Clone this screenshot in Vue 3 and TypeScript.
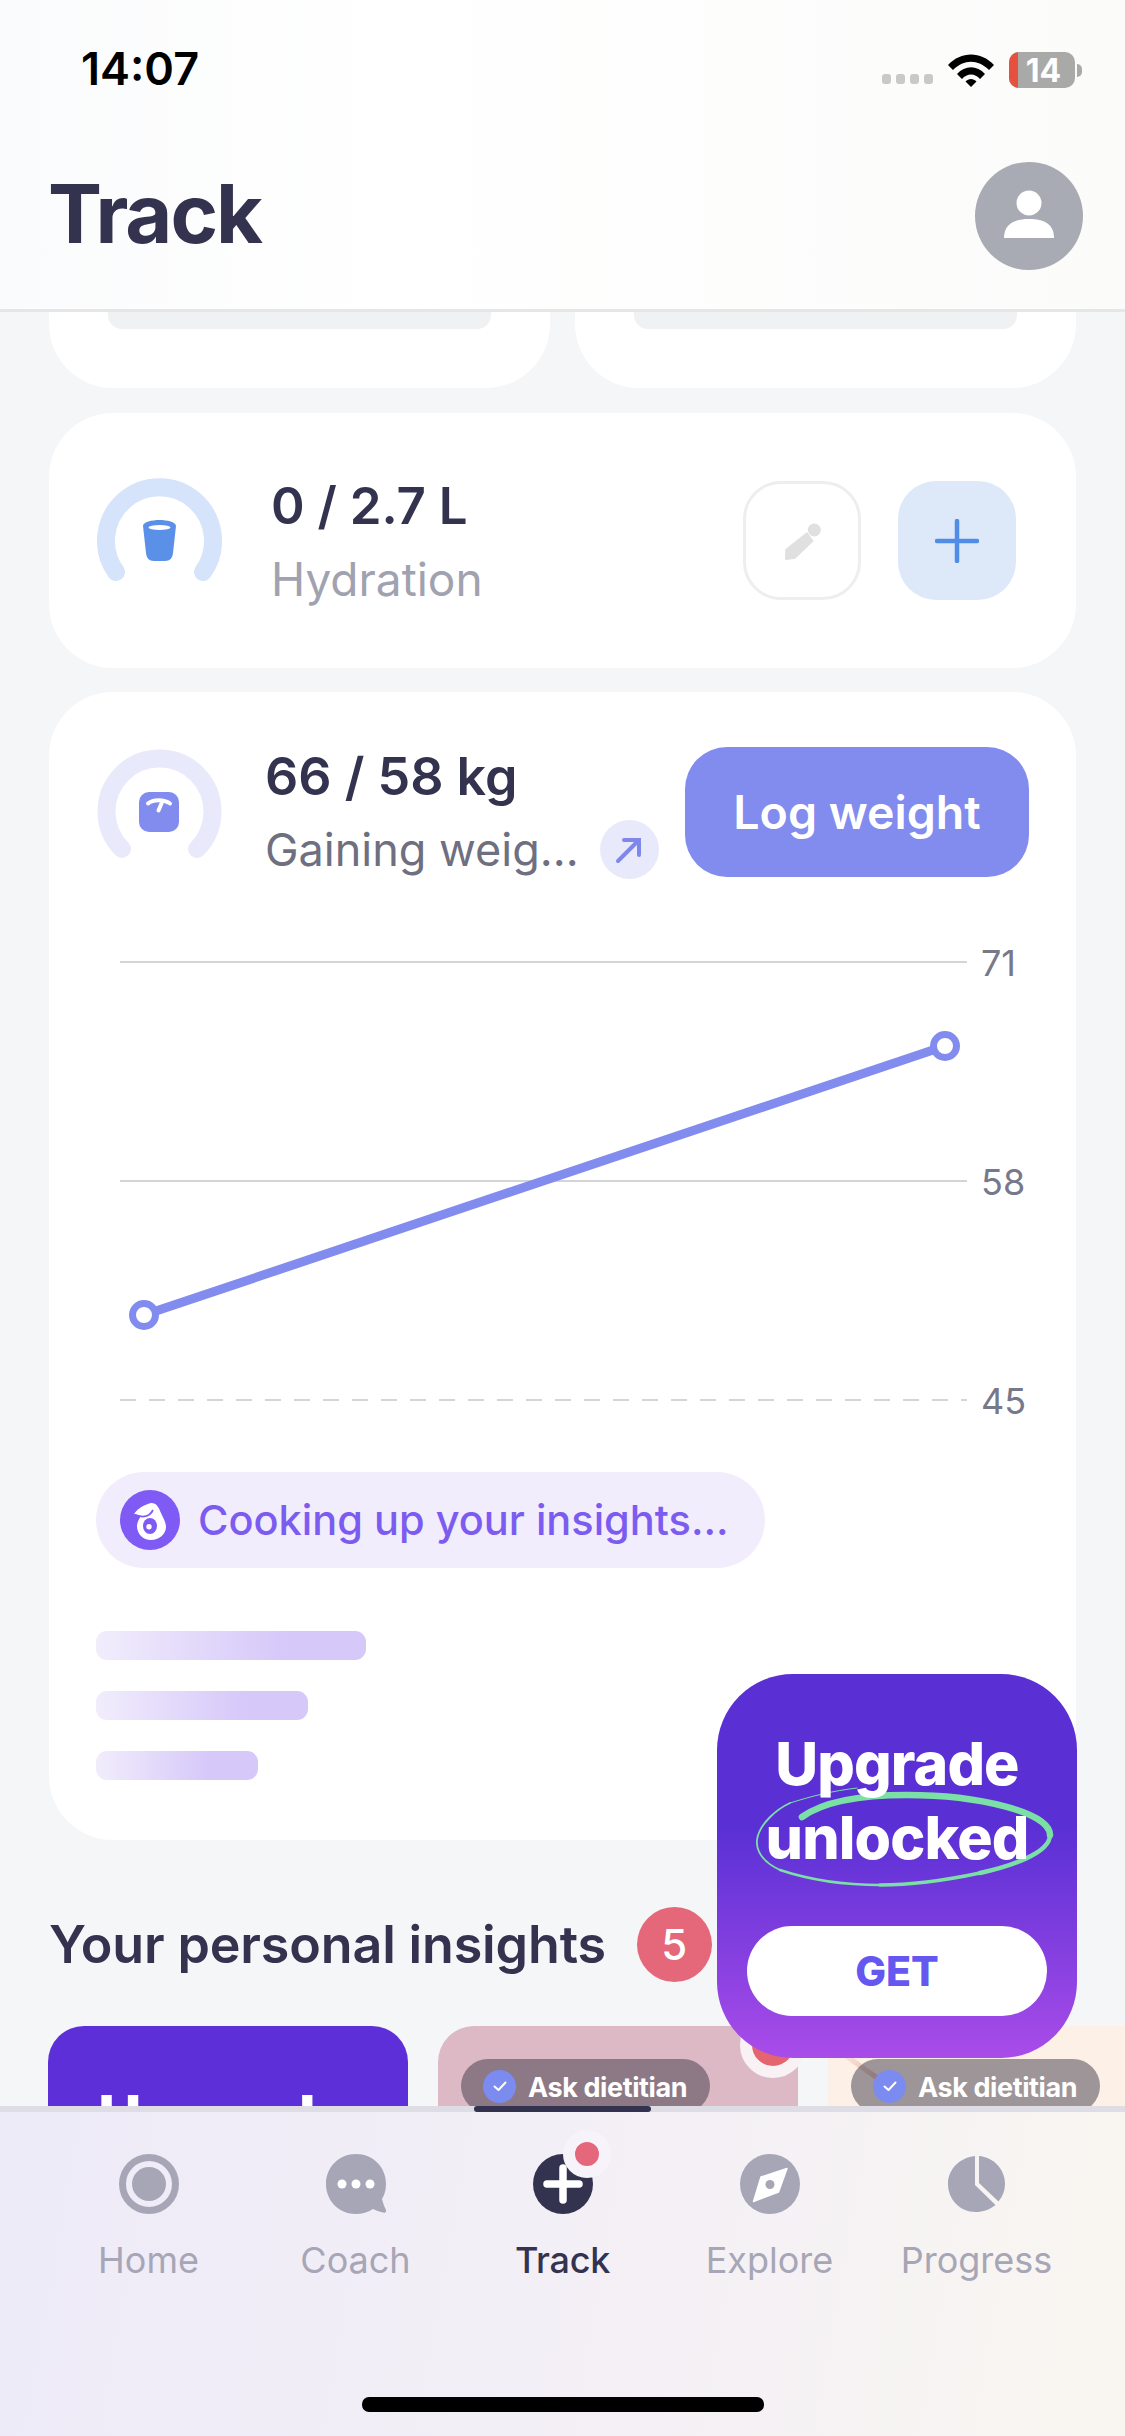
<script setup lang="ts">
const bars: number[] = [270, 212, 162]
const insightCards = [
  { tone: 'rose', dot: true },
  { tone: 'peach', dot: false },
]
</script>

<template>
  <div class="screen">
    <header class="top">
      <div class="status">
        <span class="time">14:07</span>
        <div class="sys">
          <span class="signal"><i></i><i></i><i></i><i></i></span>
          <svg class="wifi" viewBox="0 0 46 33" width="46" height="33">
            <path d="M0 11 C13 -3 33 -3 46 11 L41 16 C30 5 16 5 5 16 Z" fill="#000" />
            <path d="M9 20 C17 11 29 11 37 20 L32 25 C27 19 19 19 14 25 Z" fill="#000" />
            <path d="M17.5 27.5 C20.5 24 25.5 24 28.5 27.5 L23 33 Z" fill="#000" />
          </svg>
          <div class="battery">
            <div class="cell"><b class="low"></b><span>14</span></div>
            <b class="tip"></b>
          </div>
        </div>
      </div>
      <div class="title-row">
        <h1>Track</h1>
        <div class="avatar">
          <svg viewBox="0 0 108 108" width="108" height="108">
            <ellipse cx="54" cy="41" rx="12.5" ry="12.5" fill="#fff" />
            <path d="M29 76 C29 62 39 57 54 57 C69 57 79 62 79 76 Z" fill="#fff" />
          </svg>
        </div>
      </div>
    </header>

    <main class="feed">
      <div class="stub-row">
        <div class="stub"><div class="stub-bar"></div></div>
        <div class="stub"><div class="stub-bar"></div></div>
      </div>

      <section class="card water">
        <svg class="ring" viewBox="0 0 125 125" width="125" height="125">
          <path d="M19 94 A53.5 53.5 0 1 1 106 94" fill="none" stroke="#d5e4fa" stroke-width="18" stroke-linecap="round" />
          <path d="M46 48 C46 44 55 42 62.500 42 C70 42 79 44 79 48 L76 75 C75.500 80 73 83 68 83 L57 83 C52 83 49.500 80 49 75 Z" fill="#5b90e8" />
          <ellipse cx="62.500" cy="49.500" rx="11" ry="2.500" fill="#fff" />
        </svg>
        <div class="water-text">
          <div class="value">0 / 2.7 L</div>
          <div class="sub">Hydration</div>
        </div>
        <button class="square ghost">
          <svg viewBox="0 0 40 40" width="40" height="40">
            <path d="M3.300 28.300 L25 11 L31.700 20 L13.300 37.700 L4.500 39 Q3 39 3 37.500 Z" fill="#e0e0e0" />
            <circle cx="32.300" cy="9" r="6.500" fill="#e0e0e0" />
          </svg>
        </button>
        <button class="square tint">
          <svg viewBox="0 0 44 44" width="44" height="44">
            <path d="M22 2 V42 M2 22 H42" stroke="#4f8de6" stroke-width="4.500" stroke-linecap="round" />
          </svg>
        </button>
      </section>

      <section class="card weight">
        <div class="weight-head">
          <svg class="ring ring-weight" viewBox="0 0 125 125" width="125" height="125">
            <path d="M25 100 A53 53 0 1 1 100 100" fill="none" stroke="#e8eafb" stroke-width="18" stroke-linecap="round" />
            <rect x="42" y="43" width="40" height="40" rx="10" fill="#828cee" />
            <path d="M51 54.500 C56 50 67 50 73 54.500 M65.500 52 L61.500 61.500" fill="none" stroke="#fff" stroke-width="4" stroke-linecap="round" />
          </svg>
          <div class="weight-text">
            <div class="value">66 / 58 kg</div>
            <div class="trend">
              <span class="sub dim">Gaining weig...</span>
              <span class="trend-dot">
                <svg viewBox="0 0 28 28" width="28" height="28">
                  <path d="M3 25 L24 4 M9 4 H24 V19" fill="none" stroke="#7f88e8" stroke-width="4" stroke-linecap="round" />
                </svg>
              </span>
            </div>
          </div>
          <button class="log">Log weight</button>
        </div>

        <svg class="chart" viewBox="0 0 1029 490" width="1029" height="490">
          <line x1="72" y1="22" x2="919" y2="22" stroke="#d4d5d8" stroke-width="2" />
          <line x1="72" y1="241" x2="919" y2="241" stroke="#d4d5d8" stroke-width="2" />
          <line x1="72" y1="460" x2="919" y2="460" stroke="#d4d5d8" stroke-width="2" stroke-dasharray="16 13" />
          <text x="933" y="36" class="axis">71</text>
          <text x="933" y="255" class="axis">58</text>
          <text x="933" y="474" class="axis">45</text>
          <line x1="96" y1="375" x2="897" y2="106" stroke="#828cee" stroke-width="9" />
          <circle cx="96" cy="375" r="11.500" fill="#fff" stroke="#828cee" stroke-width="7" />
          <circle cx="897" cy="106" r="11.500" fill="#fff" stroke="#828cee" stroke-width="7" />
        </svg>

        <div class="cooking">
          <svg viewBox="0 0 60 60" width="60" height="60">
            <circle cx="30" cy="30" r="30" fill="#7f5af5" />
            <path d="M31 13 C37 13 39 18 41 23 C43 28 46 32 46 37 C46 44 39 50 31 50 C23 50 17 44 17 36 C17 32 19 29 21 26 L14 24 C18 18 24 15 31 13 Z" fill="#fff" />
            <path d="M14.500 24.500 C21 27.500 29 28 33 20" fill="none" stroke="#7f5af5" stroke-width="1.800" />
            <ellipse cx="30" cy="36" rx="7" ry="8" fill="#7f5af5" />
            <circle cx="29" cy="36.700" r="2.700" fill="#fff" />
          </svg>
          <span>Cooking up your insights...</span>
        </div>

        <div class="lines">
          <div v-for="w in bars" :key="w" class="line" :style="{ width: w + 'px' }"></div>
        </div>
      </section>

      <div class="insights-head">
        <h2>Your personal insights</h2>
        <span class="count">5</span>
      </div>

      <div class="insights">
        <article class="insight plum"><strong>Upgrade</strong></article>
        <article v-for="c in insightCards" :key="c.tone" class="insight" :class="c.tone">
          <i v-if="c.tone === 'peach'" class="streak"></i>
          <div class="ask">
            <span class="tick">
              <svg viewBox="0 0 16 16" width="16" height="16">
                <path d="M2.500 8.500 L6.500 12 L13.500 4.500" fill="none" stroke="#fff" stroke-width="2" stroke-linecap="round" stroke-linejoin="round" />
              </svg>
            </span>
            <span class="ask-label">Ask dietitian</span>
          </div>
          <i v-if="c.dot" class="unread"></i>
        </article>
      </div>
    </main>

    <aside class="promo">
      <svg class="scribble" viewBox="0 0 360 384" width="360" height="384">
        <g fill="none" stroke="#7be0a5" stroke-linecap="round">
          <path d="M85 143 C110 125 150 121 190 121 C260 121 333 138 333 161" stroke-width="6.500" />
          <path d="M333 161 C333 180 290 193 263 199" stroke-width="4.500" />
          <path d="M263 199 C230 206 195 211 163 211" stroke-width="3.500" />
          <path d="M163 211 C120 211 90 205 63 196" stroke-width="2.500" />
          <path d="M63 196 C45 188 39 176 40 166 C42 150 60 135 73 129" stroke-width="1.800" />
          <path d="M73 129 C95 122 115 117 140 114" stroke-width="1" />
        </g>
      </svg>
      <div class="promo-text">Upgrade<br />unlocked</div>
      <button class="get">GET</button>
    </aside>

    <nav class="tabs">
      <i class="active-mark"></i>
      <div class="tab">
        <svg viewBox="0 0 60 60" width="60" height="60">
          <circle cx="30" cy="30" r="26.500" fill="none" stroke="#a6a6b6" stroke-width="7" />
          <circle cx="30" cy="30" r="17" fill="#a6a6b6" />
        </svg>
        <span>Home</span>
      </div>
      <div class="tab">
        <svg viewBox="0 0 60 60" width="60" height="60">
          <path d="M30 0 C47 0 60 13 60 30 C60 36 58.500 41 56 45 C57 49 58.500 53 60 56 C60.500 58 59 59 57 58.500 C53 57.500 50 56.500 47 55 C42 58.500 36 60 30 60 C13 60 0 47 0 30 C0 13 13 0 30 0 Z" fill="#a6a6b6" />
          <circle cx="16" cy="30" r="4.500" fill="#fff" />
          <circle cx="30" cy="30" r="4.500" fill="#fff" />
          <circle cx="44" cy="30" r="4.500" fill="#fff" />
        </svg>
        <span>Coach</span>
      </div>
      <div class="tab current">
        <svg viewBox="0 0 60 60" width="60" height="60">
          <circle cx="30" cy="30" r="30" fill="#33334f" />
          <path d="M30 14 V46 M14 30 H46" stroke="#fff" stroke-width="7.500" stroke-linecap="round" />
        </svg>
        <i class="tab-dot"></i>
        <span>Track</span>
      </div>
      <div class="tab">
        <svg viewBox="0 0 60 60" width="60" height="60">
          <circle cx="30" cy="30" r="30" fill="#a6a6b6" />
          <path d="M47 14.500 L38.500 38 L13.500 47.500 L21 23 Z" fill="#fff" stroke="#fff" stroke-width="1.500" stroke-linejoin="round" />
          <circle cx="30" cy="30.500" r="4.500" fill="#a6a6b6" />
        </svg>
        <span>Explore</span>
      </div>
      <div class="tab">
        <svg viewBox="0 0 60 60" width="60" height="60">
          <path d="M28 2 V31 L48.500 51 C43 55.500 36 58 28.500 58 C13 58 1 45.500 1 30 C1 15 13 3.500 28 2 Z" fill="#a6a6b6" />
          <path d="M32 2 C46 3 58 15 58 30 C58 36 56 42 51.500 47.500 L32 29 Z" fill="#a6a6b6" />
        </svg>
        <span>Progress</span>
      </div>
      <i class="home-bar"></i>
    </nav>
  </div>
</template>

<style>
html,
body {
  margin: 0;
  background: #f4f6f8;
}
</style>

<style scoped>
.screen {
  position: relative;
  width: 1125px;
  height: 2436px;
  overflow: hidden;
  display: flex;
  flex-direction: column;
  background: #f4f6f8;
  color: #33334f;
  font-family: Inter, "Liberation Sans", sans-serif;
}

button {
  border: 0;
  padding: 0;
  font-family: inherit;
}

.top {
  flex: none;
  box-sizing: border-box;
  height: 312px;
  padding-top: 50px;
  background: linear-gradient(90deg, #fafbfc 0%, #ffffff 35%, #fbfbfa 100%);
  border-bottom: 3px solid #e6e6e8;
}

.status {
  height: 36px;
  display: flex;
  align-items: center;
  justify-content: space-between;
  padding: 0 43px 0 81px;
}

.time {
  font-size: 45px;
  font-weight: 600;
  color: #000;
}

.sys {
  display: flex;
  align-items: center;
  margin-top: 4px;
}

.signal {
  display: flex;
  gap: 5px;
  margin: 18px 15px 0 0;
}

.signal i {
  width: 9px;
  height: 10px;
  border-radius: 3px;
  background: #c9c9c9;
}

.wifi {
  margin-right: 15px;
}

.battery {
  display: flex;
  align-items: center;
  gap: 2px;
}

.cell {
  position: relative;
  width: 66px;
  height: 36px;
  border-radius: 10px;
  overflow: hidden;
  background: #a9aaa7;
  display: flex;
  align-items: center;
  justify-content: center;
  color: #fff;
  font-size: 32px;
  font-weight: 700;
}

.low {
  position: absolute;
  inset: 0 auto 0 0;
  width: 9px;
  background: #e5503f;
}

.cell span {
  position: relative;
  margin-left: 3px;
}

.tip {
  width: 5px;
  height: 13px;
  border-radius: 0 6px 6px 0;
  background: #a9aaa7;
}

.title-row {
  display: flex;
  align-items: center;
  justify-content: space-between;
  margin-top: 76px;
  height: 108px;
  padding: 0 42px 0 48px;
}

h1 {
  margin: -5px 0 0;
  font-size: 81px;
  font-weight: 700;
  letter-spacing: -2px;
  line-height: 108px;
  color: #33334f;
}

.avatar {
  width: 108px;
  height: 108px;
  border-radius: 50%;
  background: #a9abb4;
}

.feed {
  flex: 1;
  min-height: 0;
  overflow: hidden;
  padding: 0 48px;
}

.stub-row {
  display: grid;
  grid-template-columns: 501px 501px;
  gap: 25px;
  margin-left: 1px;
}

.stub {
  height: 76px;
  background: #fff;
  border-radius: 0 0 64px 64px;
  padding: 0 59px;
}

.stub-bar {
  height: 17px;
  background: #f0f1f3;
  border-radius: 0 0 14px 14px;
}

.card {
  background: #fff;
  border-radius: 64px;
  box-sizing: border-box;
  width: 1027px;
  margin-left: 1px;
}

.water {
  height: 255px;
  margin-top: 25px;
  padding: 65px 60px 0 48px;
  display: flex;
  align-items: flex-start;
}

.water-text {
  margin: 1px auto 0 49px;
}

.value {
  font-size: 51px;
  font-weight: 600;
  line-height: 54px;
  color: #33334f;
}

.sub {
  margin-top: 18px;
  font-size: 46px;
  line-height: 56px;
  color: #a1a2af;
}

.square {
  flex: none;
  width: 118px;
  height: 119px;
  border-radius: 38px;
  display: flex;
  align-items: center;
  justify-content: center;
  margin-top: 3px;
}

.ghost {
  background: #fff;
  border: 3px solid #eeeeef;
  box-sizing: border-box;
  margin-right: 37px;
}

.tint {
  background: #dde8f9;
}

.weight {
  height: 1148px;
  margin-top: 24px;
  padding-top: 55px;
}

.weight-head {
  display: flex;
  align-items: flex-start;
  height: 130px;
  padding: 0 47px 0 48px;
}

.ring-weight {
  margin-top: 2px;
  flex: none;
}

.weight-text {
  margin-left: 43px;
  flex: 1;
  min-width: 0;
}

.weight-text .value {
  margin-top: 3px;
  font-size: 52px;
}

.trend {
  display: flex;
  align-items: center;
  margin-top: 16px;
}

.dim {
  margin-top: 0;
  font-size: 45px;
  color: #6e6f80;
  white-space: nowrap;
}

.trend-dot {
  flex: none;
  width: 59px;
  height: 59px;
  border-radius: 50%;
  margin-left: 21px;
  background: #e8eafb;
  display: flex;
  align-items: center;
  justify-content: center;
}

.log {
  flex: none;
  width: 344px;
  height: 130px;
  border-radius: 42px;
  background: #828cee;
  color: #fff;
  font-size: 46.500px;
  font-weight: 600;
}

.chart {
  display: block;
  margin: 63px 0 0 -1px;
}

.axis {
  font-family: Inter, "Liberation Sans", sans-serif;
  font-size: 36px;
  fill: #77788a;
}

.cooking {
  display: inline-flex;
  align-items: center;
  gap: 18px;
  box-sizing: border-box;
  width: 669px;
  height: 96px;
  margin: 42px 0 0 47px;
  padding-left: 24px;
  border-radius: 48px;
  background: #f1edfc;
  font-size: 41.500px;
  font-weight: 500;
  color: #7c5cf0;
  white-space: nowrap;
}

.lines {
  display: flex;
  flex-direction: column;
  gap: 31px;
  margin: 63px 0 0 47px;
}

.line {
  height: 29px;
  border-radius: 11px;
  background: linear-gradient(90deg, #f1edfc 0%, #d6c8f9 70%);
}

.insights-head {
  display: flex;
  align-items: center;
  height: 75px;
  margin-top: 67px;
  padding-left: 1px;
}

h2 {
  margin: 0;
  font-size: 52px;
  font-weight: 600;
  letter-spacing: -0.150px;
  color: #33334f;
}

.count {
  width: 75px;
  height: 75px;
  margin-left: 31px;
  border-radius: 50%;
  background: #e4687a;
  color: #fff;
  font-size: 42px;
  font-weight: 500;
  display: flex;
  align-items: center;
  justify-content: center;
}

.insights {
  display: flex;
  gap: 30px;
  margin-top: 44px;
}

.insight {
  position: relative;
  flex: none;
  width: 360px;
  height: 300px;
  border-radius: 36px;
  box-sizing: border-box;
}

.plum {
  background: #5c2fd8;
  padding: 61px 0 0 50px;
  color: #fff;
}

.plum strong {
  font-size: 60px;
  line-height: 60px;
  font-weight: 800;
  display: block;
}

.rose {
  background: #dcb9c4;
}

.peach {
  background: #fdf0e6;
  border-radius: 36px 0 0 36px;
}

.ask {
  position: absolute;
  top: 33px;
  left: 23px;
  width: 249px;
  height: 54px;
  box-sizing: border-box;
  padding-left: 22px;
  border-radius: 27px;
  background: rgba(62, 58, 72, 0.5);
  display: flex;
  align-items: center;
  gap: 12px;
  color: #fff;
  font-size: 27px;
  font-weight: 700;
  letter-spacing: -0.400px;
  white-space: nowrap;
}

.ask-label {
  padding-top: 3px;
}

.tick {
  flex: none;
  width: 33px;
  height: 33px;
  border-radius: 50%;
  background: #7c8bf0;
  display: flex;
  align-items: center;
  justify-content: center;
}

.unread {
  position: absolute;
  top: -14px;
  left: 302px;
  width: 42px;
  height: 42px;
  border: 12px solid #f8f2f4;
  border-radius: 50%;
  background: #e5656f;
}

.streak {
  position: absolute;
  top: 38px;
  left: 8px;
  width: 50px;
  height: 5px;
  background: linear-gradient(90deg, rgba(226, 160, 150, 0.1), rgba(226, 160, 150, 0.7));
  transform: rotate(35deg);
}

.promo {
  position: absolute;
  top: 1674px;
  left: 717px;
  z-index: 3;
  box-sizing: border-box;
  width: 360px;
  height: 384px;
  padding-top: 53px;
  border-radius: 76px;
  background: linear-gradient(180deg, #5a2fd4 0%, #5a30d5 40%, #a94ce9 100%);
  display: flex;
  flex-direction: column;
  align-items: center;
}

.scribble {
  position: absolute;
  inset: 0;
}

.promo-text {
  position: relative;
  color: #fff;
  font-size: 59px;
  line-height: 74px;
  font-weight: 800;
  letter-spacing: -0.900px;
  text-align: center;
}

.get {
  position: absolute;
  top: 252px;
  left: 30px;
  width: 300px;
  height: 90px;
  border-radius: 45px;
  background: #fff;
  color: #6558f0;
  font-size: 41px;
  font-weight: 800;
}

.tabs {
  position: relative;
  z-index: 2;
  flex: none;
  box-sizing: border-box;
  height: 330px;
  padding: 42px 0 0 45px;
  border-top: 6px solid #dedde6;
  background: linear-gradient(100deg, #eeebf9 0%, #f3eff6 50%, #f9f6f1 100%);
  display: flex;
  align-items: flex-start;
}

.active-mark {
  position: absolute;
  top: -6px;
  left: 474px;
  width: 177px;
  height: 6px;
  border-radius: 3px;
  background: #33334f;
}

.tab {
  position: relative;
  width: 207px;
  display: flex;
  flex-direction: column;
  align-items: center;
  gap: 24px;
  font-size: 36px;
  line-height: 44px;
  color: #a6a6b6;
}

.current {
  color: #33334f;
  font-weight: 500;
  letter-spacing: -0.300px;
}

.tab-dot {
  position: absolute;
  top: -24px;
  left: 104px;
  width: 24px;
  height: 24px;
  border: 12px solid #f6f4fa;
  border-radius: 50%;
  background: #e5677c;
}

.home-bar {
  position: absolute;
  left: 362px;
  bottom: 24px;
  width: 402px;
  height: 15px;
  border-radius: 7px;
  background: #000;
}
</style>
